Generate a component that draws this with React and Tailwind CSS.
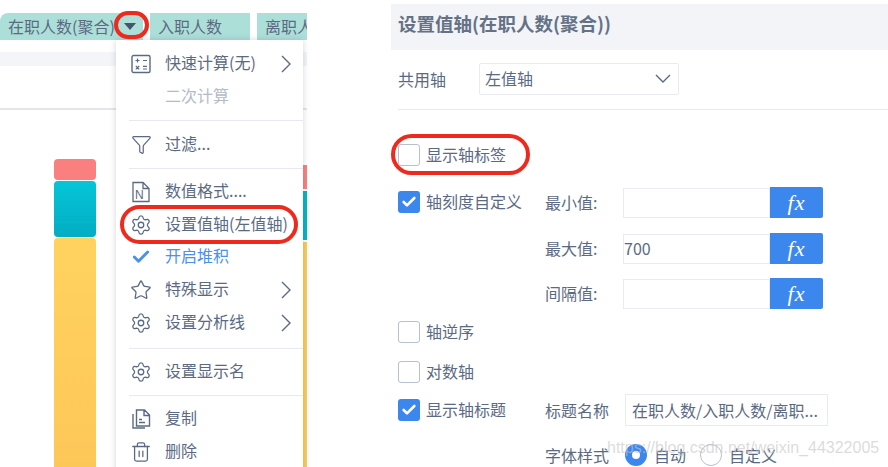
// Two-part screenshot: field dropdown menu on the left, value axis settings on the right
import React from 'react';
import { Filter, Settings, Star, Check, Trash2 } from 'lucide-react';

const ArrowRight = () => (
  <svg width="10" height="18" viewBox="0 0 10 18" fill="none" stroke="currentColor" strokeWidth="1.4">
    <path d="M1 1l8 8-8 8" />
  </svg>
);

const ArrowDown = () => (
  <svg width="16" height="10" viewBox="0 0 16 10" fill="none" stroke="currentColor" strokeWidth="1.4">
    <path d="M1 1l7 7 7-7" />
  </svg>
);

const CalcIcon = () => (
  <svg width="20" height="20" viewBox="0 0 20 20" fill="none" stroke="currentColor" strokeWidth="1.4">
    <rect x="1" y="1.500" width="18" height="17" rx="1.500" />
    <path d="M4.500 6.500h4M6.500 4.500v4M12 6.500h4M4.800 12l3.400 3.400M8.200 12l-3.400 3.400M12 12.300h4M12 15h4" strokeWidth="1.200" />
  </svg>
);

const NumberIcon = () => (
  <svg width="20" height="22" viewBox="0 0 20 22" fill="none" stroke="currentColor" strokeWidth="1.300">
    <path d="M2 20.500V1.500h10l6 6v13H2zM12 1.500v6h6" />
    <text x="4" y="18" fontSize="12" fill="currentColor" stroke="none" fontFamily="Liberation Sans, sans-serif">N</text>
  </svg>
);

const CopyIcon = () => (
  <svg width="20" height="20" viewBox="0 0 20 20" fill="none" stroke="currentColor" strokeWidth="1.400">
    <path d="M5.500 1h8l5 5v11h-13zM13 1v5.500h5.500M2 5v14h12M8 10.500h3M8 13.500h6" />
  </svg>
);

const FxButton = () => (
  <div className="flex h-[31px] w-[53px] items-center justify-center rounded-r-[2px] bg-[#3b87ee] text-[22px] italic leading-none tracking-[1px] text-white [font-family:'Liberation_Serif',serif]">
    fx
  </div>
);

function MenuItem({ icon, label, arrow, active, muted, height = 'h-[33px]' }) {
  const color = active ? 'text-[#4a90f0]' : muted ? 'text-[#b4bbc8]' : 'text-[#5b6a82]';
  return (
    <div className={`flex items-center ${height} pl-[14px] pr-[12px] text-[16px] ${color}`}>
      <div className="flex w-[22px] justify-center text-[#5b6a82]">{icon}</div>
      <span className="ml-[13px] flex-1 whitespace-nowrap pb-[3px]">{label}</span>
      {arrow && <ArrowRight />}
    </div>
  );
}

const Sep = ({ mt }) => <div className={`ml-[13px] h-[1px] bg-[#e6e9ef] ${mt}`} />;

function Box({ checked }) {
  if (checked) {
    return (
      <div className="flex h-[22px] w-[22px] shrink-0 items-center justify-center rounded-[3px] bg-[#3b87ee]">
        <Check size={16} strokeWidth={4} className="text-white" />
      </div>
    );
  }
  return <div className="h-[22px] w-[22px] shrink-0 rounded-[3px] border border-[#b9c0cc] bg-white" />;
}

function ValueInput({ value, mt }) {
  return (
    <div className={`flex items-center ${mt}`}>
      <div className="flex h-[30px] w-[147px] items-center border border-[#e8ebf0] bg-white pb-[2px] text-[16px] text-[#5b6a82]">
        {value}
      </div>
      <FxButton />
    </div>
  );
}

export default function App() {
  return (
    <div className="relative flex h-[467px] w-[888px] overflow-hidden bg-white text-[#5b6a82] [font-family:'Noto_Sans_CJK_SC','Noto_Sans',sans-serif]">
      {/* Left: chart with field pills */}
      <div className="relative h-full w-[307px] shrink-0">
        <div className="mt-[13px] flex h-[27px] gap-[7px] text-[16px] leading-[27px]">
          <div className="w-[143px] shrink-0 whitespace-nowrap rounded-tl-[8px] bg-[#addfd9] pl-[8px]">在职人数(聚合)</div>
          <div className="w-[100px] shrink-0 bg-[#addfd9] pl-[8px]">入职人数</div>
          <div className="flex-1 overflow-hidden whitespace-nowrap bg-[#addfd9] pl-[8px]">离职人数</div>
        </div>
        <div className="mt-[12px] h-[14px] bg-[#f3f5f8]" />
        <div className="mt-[42px] h-[2px] bg-[#e4e5e8]" />
        <div className="flex justify-between pl-[54px]">
          <div className="flex w-[42px] flex-col gap-[1px] pt-[49px]">
            <div className="h-[21px] rounded-[4px] bg-[#fa8080]" />
            <div className="h-[56px] rounded-[4px] bg-gradient-to-b from-[#05c5d8] to-[#03adc3]" />
            <div className="h-[235px] rounded-[4px] bg-gradient-to-b from-[#ffd25f] to-[#fdc758]" />
          </div>
          <div className="flex w-[4px] flex-col gap-[2px] pt-[55px]">
            <div className="h-[24px] bg-[#fa8080]" />
            <div className="h-[49px] bg-[#03b5ca]" />
            <div className="h-[230px] bg-[#fdcb5a]" />
          </div>
        </div>

        {/* dropdown menu */}
        <div className="absolute left-[116px] top-[40px] h-[440px] w-[187px] bg-white pt-[7px] shadow-[0_0_6px_rgba(60,70,90,0.22)]">
          <MenuItem icon={<CalcIcon />} label="快速计算(无)" arrow />
          <MenuItem label="二次计算" muted />
          <Sep mt="mt-[7px]" />
          <div className="mt-[7px]"><MenuItem icon={<Filter size={21} strokeWidth={1.4} />} label="过滤..." /></div>
          <Sep mt="mt-[7px]" />
          <div className="mt-[6px]"><MenuItem icon={<NumberIcon />} label="数值格式...." /></div>
          <MenuItem icon={<Settings size={22} strokeWidth={1.4} />} label="设置值轴(左值轴)" />
          <MenuItem icon={<Check size={20} strokeWidth={3.5} className="text-[#4a90f0]" />} label="开启堆积" active height="h-[31px]" />
          <div className="mt-[1px]"><MenuItem icon={<Star size={22} strokeWidth={1.4} />} label="特殊显示" arrow /></div>
          <MenuItem icon={<Settings size={22} strokeWidth={1.4} />} label="设置分析线" arrow />
          <Sep mt="mt-[9px]" />
          <div className="mt-[6px]"><MenuItem icon={<Settings size={22} strokeWidth={1.4} />} label="设置显示名" /></div>
          <Sep mt="mt-[7px]" />
          <div className="mt-[6px]"><MenuItem icon={<CopyIcon />} label="复制" /></div>
          <MenuItem icon={<Trash2 size={22} strokeWidth={1.4} />} label="删除" />
        </div>

        {/* red annotations */}
        <div className="absolute left-[114px] top-[11px] h-[28px] w-[35px] rounded-full border-[4px] border-[#ee2a1e]" />
        <div className="absolute left-[124px] top-[23px] h-0 w-0 border-x-[6px] border-t-[7px] border-x-transparent border-t-[#46536a]" />
        <div className="absolute left-[120px] top-[205px] h-[39px] w-[178px] rounded-full border-[4px] border-[#ee2a1e]" />
      </div>

      {/* Right: value axis settings */}
      <div className="relative ml-[84px] flex-1 pt-[4px] text-[16px] leading-[22px]">
        <div className="flex h-[46px] items-center bg-[#f2f4f8] pb-[8px] pl-[7px] text-[18.500px] font-bold text-[#657286]">
          设置值轴(在职人数(聚合))
        </div>
        <div className="mt-[13px] flex items-center pl-[7px]">
          <span className="w-[81px]">共用轴</span>
          <div className="flex h-[32px] w-[200px] items-center justify-between rounded-[2px] border border-[#e8ebf0] pl-[5px] pr-[7px]">
            <span className="-translate-y-[1px]">左值轴</span>
            <ArrowDown />
          </div>
        </div>
        <div className="ml-[7px] mt-[14px] h-[1px] bg-[#e6e9ef]" />

        <div className="ml-[7px] mt-[34px] flex items-center gap-[6px]">
          <Box />
          <span className="-translate-y-[1px]">显示轴标签</span>
        </div>

        <div className="ml-[7px] mt-[21px] flex items-start">
          <div className="mt-[4px] flex w-[147px] items-center gap-[6px]">
            <Box checked />
            <span className="-translate-y-[1px] whitespace-nowrap">轴刻度自定义</span>
          </div>
          <div className="flex w-[78px] flex-col">
            <span className="flex h-[31px] items-center pb-[2px]">最小值:</span>
            <span className="mt-[15px] flex h-[31px] items-center pb-[2px]">最大值:</span>
            <span className="mt-[14px] flex h-[31px] items-center pb-[2px]">间隔值:</span>
          </div>
          <div className="flex flex-col">
            <ValueInput />
            <ValueInput value="700" mt="mt-[15px]" />
            <ValueInput mt="mt-[14px]" />
          </div>
        </div>

        <div className="ml-[7px] mt-[12px] flex items-center gap-[6px]">
          <Box />
          <span className="-translate-y-[1px]">轴逆序</span>
        </div>
        <div className="ml-[7px] mt-[18px] flex items-center gap-[6px]">
          <Box />
          <span className="-translate-y-[1px]">对数轴</span>
        </div>

        <div className="ml-[7px] mt-[11px] flex items-center">
          <div className="flex w-[147px] items-center gap-[6px]">
            <Box checked />
            <span className="-translate-y-[1px]">显示轴标题</span>
          </div>
          <span className="w-[80px]">标题名称</span>
          <div className="flex h-[32px] w-[203px] items-center whitespace-nowrap border border-[#e8ebf0] pl-[6px]">
            在职人数/入职人数/离职...
          </div>
        </div>

        <div className="ml-[154px] mt-[18px] flex items-center">
          <span className="w-[80px]">字体样式</span>
          <div className="flex h-[22px] w-[22px] items-center justify-center rounded-full bg-[#3b87ee]">
            <div className="h-[8px] w-[8px] rounded-full bg-white" />
          </div>
          <span className="ml-[7px] w-[46px]">自动</span>
          <div className="h-[22px] w-[22px] rounded-full border border-[#b9c0cc]" />
          <span className="ml-[7px]">自定义</span>
        </div>

        {/* blog watermark */}
        <div className="absolute left-[216px] top-[437px] whitespace-nowrap text-[16px] text-[#c4c4c4]/60 [font-family:'Liberation_Sans',sans-serif]">
          https://blog.csdn.net/weixin_44322005
        </div>

        {/* red annotation */}
        <div className="absolute left-[0px] top-[134px] h-[41px] w-[139px] rounded-full border-[4px] border-[#ee2a1e]" />
      </div>
    </div>
  );
}
